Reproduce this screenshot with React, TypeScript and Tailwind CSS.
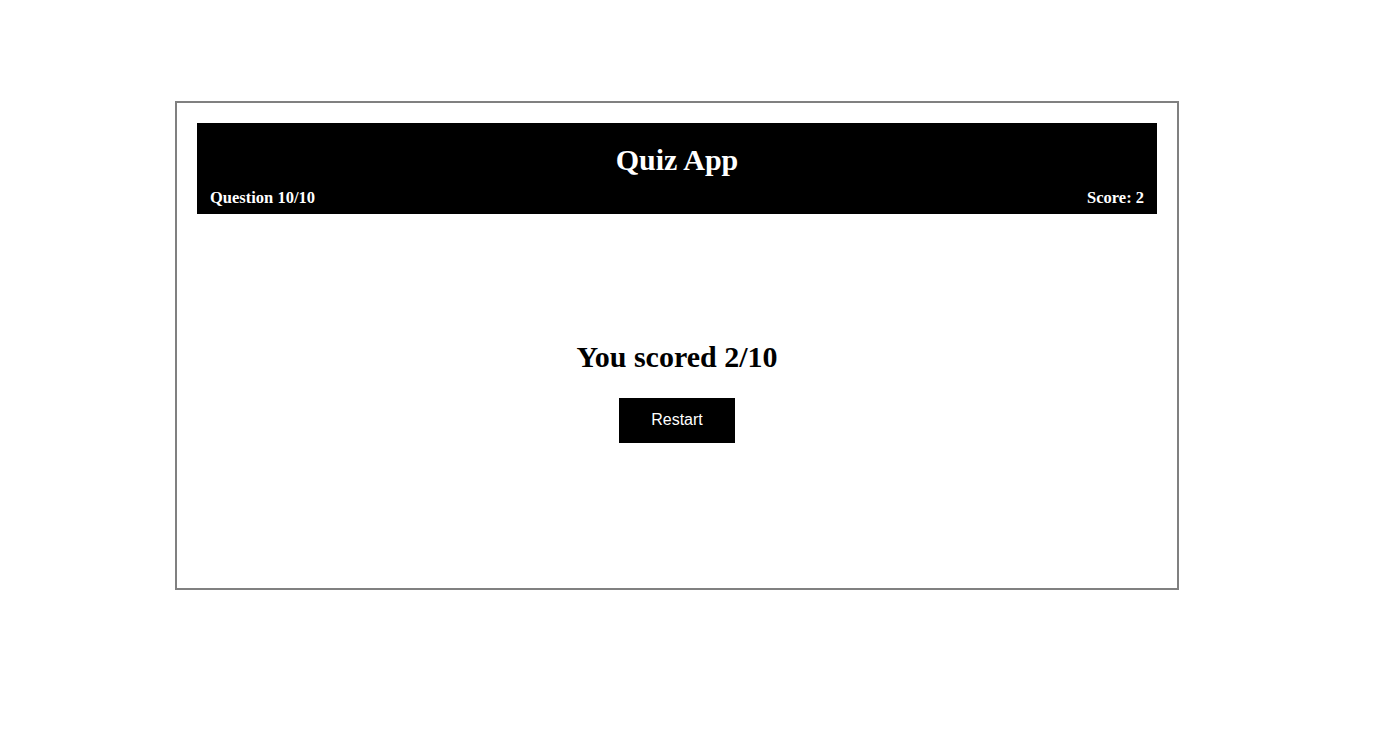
import React, { useState } from 'react';

const serif = { fontFamily: '"Liberation Serif", "Times New Roman", serif' };

export default function App() {
  const [score] = useState(2);
  const total = 10;

  return (
    <div className="min-h-[730px] bg-white pt-[101px]">
      <div className="ml-[175px] w-[1004px] border-2 border-[#808080] p-5" style={serif}>
        <header className="h-[91px] bg-black px-[13px] pt-[18px] text-white">
          <h1 className="text-center text-[30px] font-bold leading-[37px]">Quiz App</h1>
          <div className="mt-[11px] flex items-center justify-between text-[16.5px] font-bold leading-[18px]">
            <span>Question {total}/{total}</span>
            <span>Score: {score}</span>
          </div>
        </header>
        <main className="flex h-[354px] flex-col items-center justify-center">
          <h2 className="text-[30px] font-bold leading-[33px]">
            You scored {score}/{total}
          </h2>
          <button
            className="mt-[25px] h-[45px] w-[116px] bg-black text-base leading-[18px] text-white"
            style={{ fontFamily: '"Liberation Sans", Arial, sans-serif' }}
          >
            Restart
          </button>
        </main>
      </div>
    </div>
  );
}
